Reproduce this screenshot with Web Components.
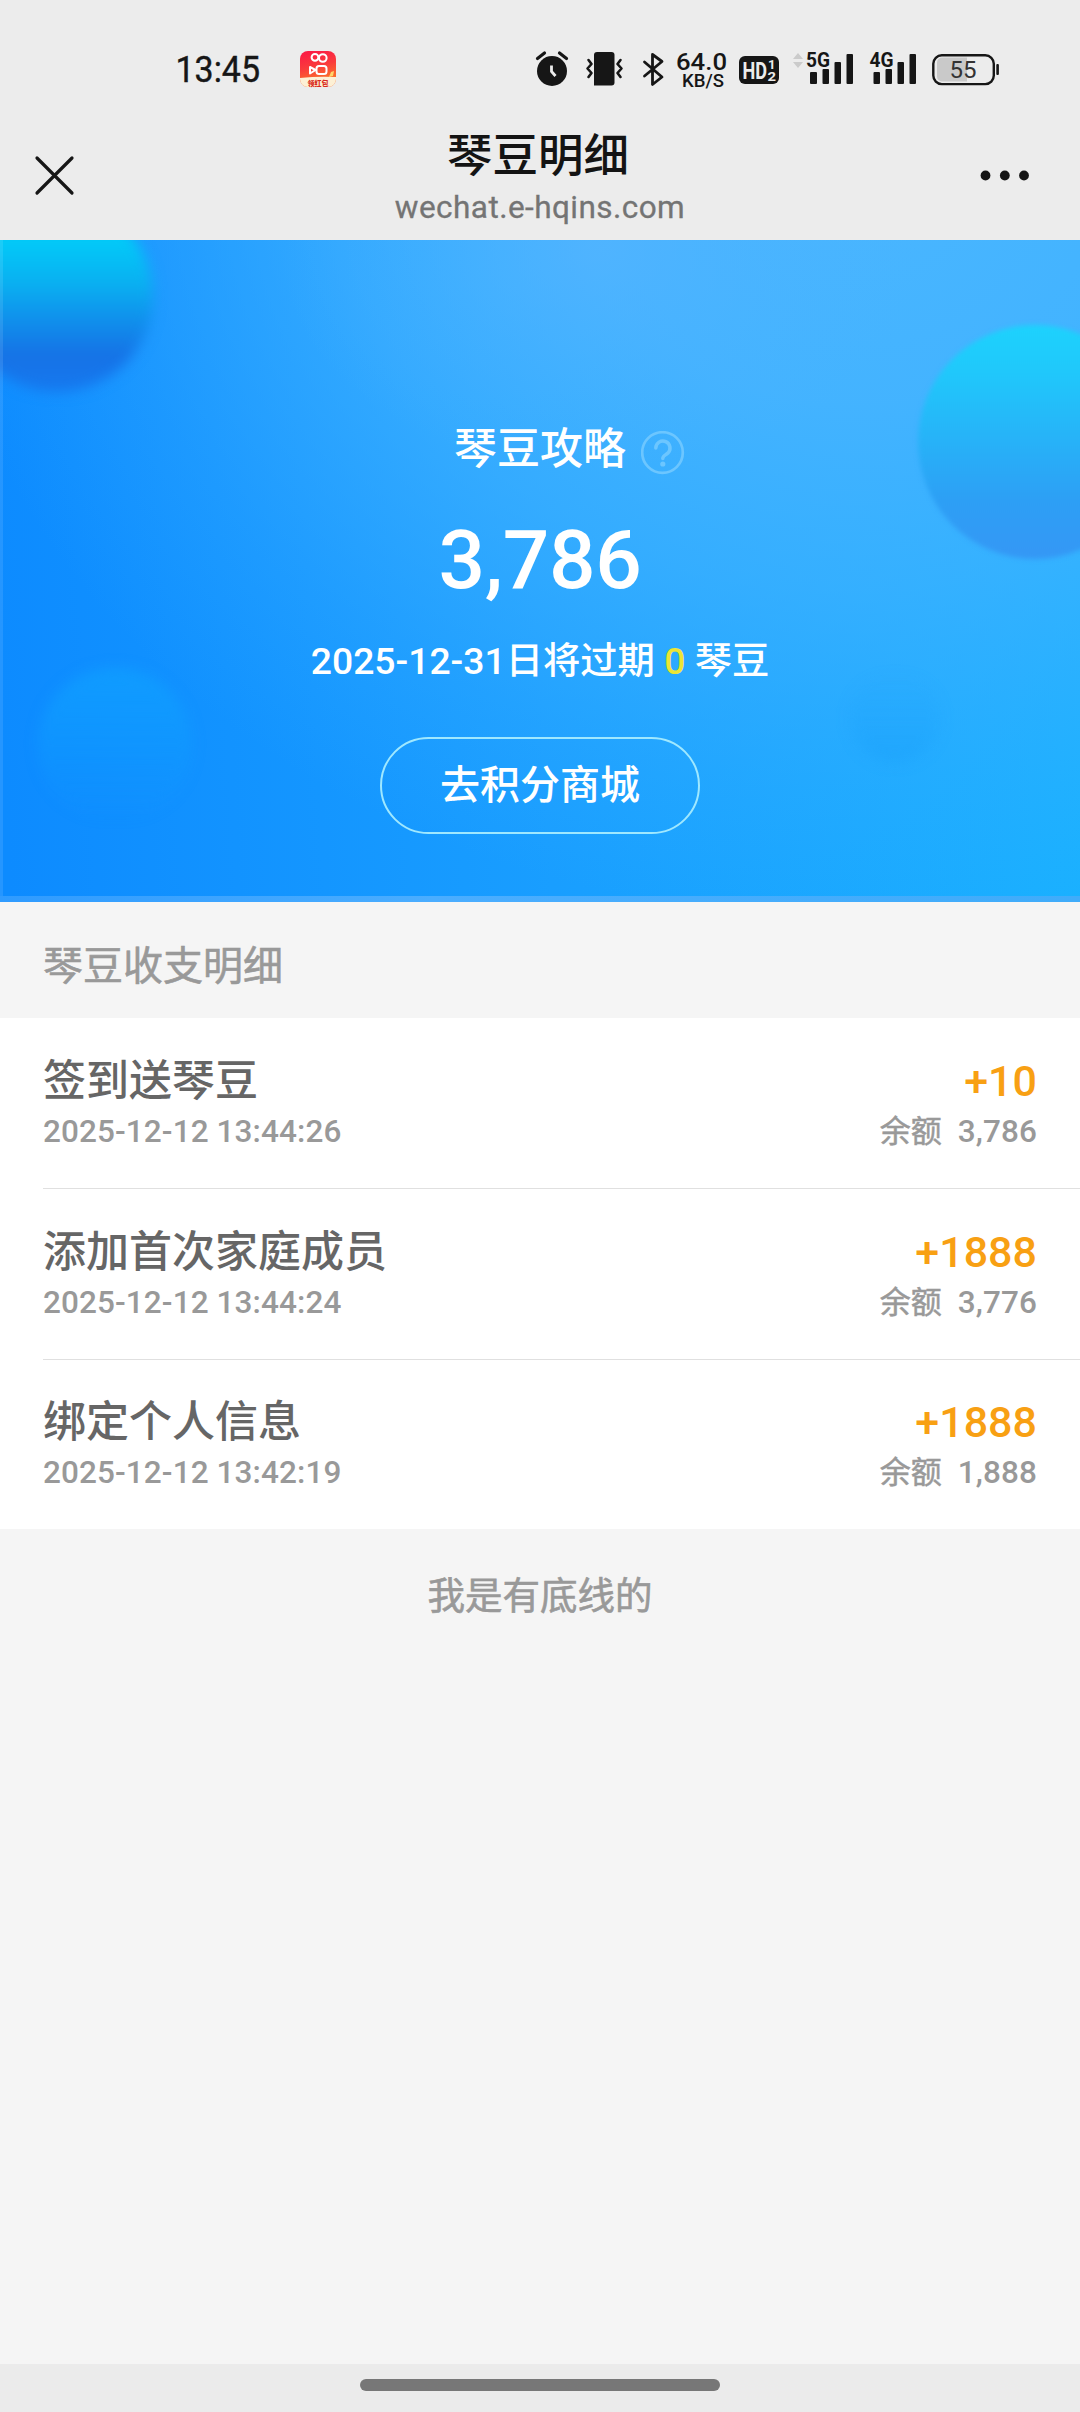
<!DOCTYPE html>
<html lang="zh-CN">
<head>
<meta charset="utf-8">
<title>琴豆明细</title>
<style>
html,body{margin:0;padding:0}
body{width:1080px;height:2412px;background:#f5f5f5;overflow:hidden;font-family:Roboto,"Noto Sans CJK SC",sans-serif}
</style>
</head>
<body>
<bean-page></bean-page>
<script>
const define = (name, html) => customElements.define(name, class extends HTMLElement {
  constructor() {
    super();
    const t = document.createElement('template');
    t.innerHTML = html;
    this.attachShadow({ mode: 'open' }).appendChild(t.content.cloneNode(true));
  }
});

define('status-bar', `
<style>
:host{display:flex;height:110px;background:#ececec;color:#161616;box-sizing:border-box;padding:40px 0 0 170px}
svg{display:block;flex:none;height:60px;font-family:Roboto,"Noto Sans CJK SC",sans-serif}
.gap{flex:none;width:184px}
</style>
<svg width="110" viewBox="170 40 110 60"><text x="175.500" y="82" font-size="36" textLength="84.500" lengthAdjust="spacingAndGlyphs" fill="#161616" stroke="#161616" stroke-width=".4">13:45</text></svg>
<svg width="60" viewBox="280 40 60 60">
  <defs>
    <linearGradient id="k" x1="0" y1="0" x2="0.25" y2="1"><stop offset="0" stop-color="#fb1747"/><stop offset=".5" stop-color="#fa3b3c"/><stop offset=".85" stop-color="#fb6a2c"/></linearGradient>
    <clipPath id="c"><rect x="300" y="51" width="36" height="36" rx="8"/></clipPath>
  </defs>
  <g clip-path="url(#c)">
    <rect x="300" y="51" width="36" height="36" fill="url(#k)"/>
    <path d="M299 78Q318 76 337 77V88H299Z" fill="#fdf0d5"/>
    <path d="M331 72l3-1-1 5-4 1z" fill="#ffd66b"/>
  </g>
  <g fill="none" stroke="#fff" stroke-width="2">
    <circle cx="315" cy="57.3" r="3.4"/><circle cx="322.8" cy="58" r="3.8"/>
    <rect x="316.5" y="66" width="10" height="8" rx="2.5"/><path d="M315.5 70L310 67v6.500z" stroke-linejoin="round"/>
  </g>
  <text x="307.500" y="86" font-size="7" font-weight="900" fill="#d82a20" textLength="21" lengthAdjust="spacingAndGlyphs">领红包</text>
</svg>
<span class="gap"></span>
<svg width="51" viewBox="524 40 51 60">
  <circle cx="552" cy="71" r="15" fill="#161616"/>
  <path d="M537.500 58.500l7-5.500M566.500 58.500l-7-5.500" stroke="#161616" stroke-width="3.200" stroke-linecap="round"/>
  <path d="M551.500 65.500V71.500L555.500 76" fill="none" stroke="#ececec" stroke-width="2.800"/>
</svg>
<svg width="60" viewBox="575 40 60 60">
  <path d="M597 52h14.500a3 3 0 0 1 3 3v27.500a3 3 0 0 1-3 3H594V55a3 3 0 0 1 3-3z" fill="#161616"/>
  <path d="M588.500 60l3 4-4 4.500 4 4.500-3 4M620.500 60l-3 4 4 4.500-4 4.500 3 4" fill="none" stroke="#161616" stroke-width="2.600" stroke-linejoin="round" stroke-linecap="round"/>
</svg>
<svg width="37" viewBox="635 40 37 60"><path d="M644.500 62l17.500 15-9.500 7.500V54.500L662 61.500 644.500 76" fill="none" stroke="#161616" stroke-width="2.800" stroke-linejoin="round" stroke-linecap="round"/></svg>
<svg width="62" viewBox="672 40 62 60" fill="#161616" font-weight="500">
  <text x="676" y="70" font-size="24" textLength="51" lengthAdjust="spacingAndGlyphs">64.0</text>
  <text x="682" y="87" font-size="18" textLength="42" lengthAdjust="spacingAndGlyphs">KB/S</text>
</svg>
<svg width="54" viewBox="734 40 54 60" fill="#ececec" font-weight="700">
  <rect x="739" y="56" width="40" height="28" rx="6" fill="#161616"/>
  <text x="742.500" y="79" font-size="24" textLength="24.500" lengthAdjust="spacingAndGlyphs">HD</text>
  <text x="768" y="69" font-size="12.500" textLength="7.500" lengthAdjust="spacingAndGlyphs">1</text>
  <text x="767.500" y="81" font-size="12.500" textLength="8.500" lengthAdjust="spacingAndGlyphs">2</text>
</svg>
<svg width="74" viewBox="788 40 74 60" fill="#161616">
  <path d="M793 59l5-6 5 6zM793 62h10l-5 6z" fill="#cbcbcb"/>
  <text x="806" y="67" font-size="20" font-weight="700" textLength="24" lengthAdjust="spacingAndGlyphs">5G</text>
  <rect x="810" y="72" width="7" height="12" rx="1"/><rect x="822.500" y="69" width="6.500" height="15" rx="1"/><rect x="834.500" y="62" width="6.500" height="22" rx="1"/><rect x="846.500" y="54" width="6.500" height="30" rx="1"/>
</svg>
<svg width="62" viewBox="862 40 62 60" fill="#161616">
  <text x="869.500" y="67" font-size="20" font-weight="700" textLength="24" lengthAdjust="spacingAndGlyphs">4G</text>
  <rect x="873.500" y="72" width="6.500" height="12" rx="1"/><rect x="885.500" y="69" width="6.500" height="15" rx="1"/><rect x="897.500" y="62" width="6.500" height="22" rx="1"/><rect x="909.500" y="54" width="6.500" height="30" rx="1"/>
</svg>
<svg width="86" viewBox="924 40 86 60">
  <path d="M967 57.500v24H942a5 5 0 0 1-5-5v-14a5 5 0 0 1 5-5z" fill="#c9c9c9"/>
  <rect x="933.300" y="55.300" width="60.500" height="28.800" rx="8.500" fill="none" stroke="#161616" stroke-width="2.400"/>
  <rect x="996.300" y="64" width="2.600" height="11" rx="1" fill="#161616"/>
  <text x="949.500" y="78" font-size="23.500" textLength="27" lengthAdjust="spacingAndGlyphs" fill="#333">55</text>
</svg>
`);

define('nav-bar', `
<style>
:host{display:grid;grid-template-columns:200px 1fr 200px;height:130px;background:#ececec}
.m{display:flex;flex-direction:column;align-items:center;padding-top:22px}
.t{font-size:45.500px;line-height:50px;color:#141414;font-weight:500;margin-right:4px}
.u{font-size:31.500px;line-height:40px;margin-top:6px;color:#747474;letter-spacing:.45px;-webkit-text-stroke:.3px #747474}
svg{display:block;width:200px;height:130px}
</style>
<svg viewBox="0 110 200 130"><path d="M37 158l35 35M72 158l-35 35" stroke="#161616" stroke-width="3.200" stroke-linecap="round"/></svg>
<div class="m"><div class="t"><slot name="title"></slot></div><div class="u"><slot name="url"></slot></div></div>
<svg viewBox="880 110 200 130" fill="#161616"><circle cx="985.500" cy="175.500" r="4.900"/><circle cx="1004.800" cy="175.500" r="4.900"/><circle cx="1024" cy="175.500" r="4.900"/></svg>
`);

define('bean-hero', `
<style>
:host{display:grid;height:662px;color:#fff;overflow:hidden}
.bg,.in{grid-area:1/1;min-width:0}
.bg{display:block;width:1080px;height:662px}
.in{z-index:1;display:flex;flex-direction:column;align-items:center;padding-top:179px}
.h{display:grid;grid-template-columns:1fr auto 1fr;width:100%;height:60px;line-height:60px;font-size:43px;font-weight:500}
.h svg{grid-column:3;width:44px;height:44px;margin:11.500px 0 0 14.500px}
.h span{grid-column:2}
.n{font-size:82px;line-height:90px;font-weight:500;margin-top:36px;letter-spacing:-.4px}
.e{font-size:37.300px;line-height:50px;margin-top:31px;font-weight:500;white-space:pre}
.e b{color:#ebe536;font-weight:500}
button{font:500 40px/95px Roboto,"Noto Sans CJK SC",sans-serif;box-sizing:border-box;width:320px;height:97px;margin:51px 0 0;padding:0;border:2px solid #9fe8ff;border-radius:49px;background:none;color:#fff}
button slot{display:block;margin-top:-1px}
</style>
<svg class="bg" viewBox="0 240 1080 662">
  <defs>
    <linearGradient id="b" gradientUnits="userSpaceOnUse" x1="0" y1="700" x2="1080" y2="640"><stop offset="0" stop-color="#0d8bff"/><stop offset=".5" stop-color="#199eff"/><stop offset="1" stop-color="#1ab1ff"/></linearGradient>
    <radialGradient id="t" gradientUnits="userSpaceOnUse" cx="0" cy="0" r="1" gradientTransform="translate(850 180) scale(920 740)"><stop offset="0" stop-color="#4ab6ff"/><stop offset=".3" stop-color="#47b4ff" stop-opacity=".92"/><stop offset=".55" stop-color="#44b3ff" stop-opacity=".64"/><stop offset=".8" stop-color="#40b0ff" stop-opacity=".25"/><stop offset="1" stop-color="#3aaeff" stop-opacity="0"/></radialGradient>
    <radialGradient id="r" gradientUnits="userSpaceOnUse" cx="0" cy="0" r="1" gradientTransform="translate(600 250) scale(320 220)"><stop offset="0" stop-color="#54b4ff" stop-opacity=".7"/><stop offset=".5" stop-color="#50b3ff" stop-opacity=".3"/><stop offset="1" stop-color="#4ab2ff" stop-opacity="0"/></radialGradient>
    <linearGradient id="o1" gradientUnits="userSpaceOnUse" x1="0" y1="240" x2="0" y2="385"><stop offset="0" stop-color="#02caf8"/><stop offset=".3" stop-color="#0ab0f1"/><stop offset=".55" stop-color="#1090ec"/><stop offset=".8" stop-color="#1672e6"/><stop offset="1" stop-color="#1678ee"/></linearGradient>
    <linearGradient id="o2" x1="0" y1="0" x2="0" y2="1"><stop offset="0" stop-color="#1dd2fd"/><stop offset=".2" stop-color="#20c8fb"/><stop offset=".75" stop-color="#2d9ff5"/><stop offset="1" stop-color="#3597f5"/></linearGradient>
    <linearGradient id="o3" gradientUnits="userSpaceOnUse" x1="0" y1="668" x2="0" y2="822"><stop offset="0" stop-color="#10a0ff" stop-opacity=".75"/><stop offset=".3" stop-color="#109eff" stop-opacity=".6"/><stop offset="1" stop-color="#109cff" stop-opacity="0"/></linearGradient>
    <linearGradient id="o4" x1="0" y1="0" x2="0" y2="1"><stop offset="0" stop-color="#1a9ffb" stop-opacity="0"/><stop offset="1" stop-color="#1a9ffb" stop-opacity=".4"/></linearGradient>
    <linearGradient id="f" x1="0" x2="1"><stop offset="0" stop-color="#2f9bff"/><stop offset=".4" stop-color="#4aadff"/><stop offset="1" stop-color="#40acfa"/></linearGradient>
    <filter id="s5" color-interpolation-filters="sRGB" filterUnits="userSpaceOnUse" x="-80" y="160" width="1240" height="760"><feGaussianBlur stdDeviation="6.500"/></filter>
    <filter id="s2" color-interpolation-filters="sRGB" filterUnits="userSpaceOnUse" x="860" y="280" width="360" height="330"><feGaussianBlur stdDeviation="2.500"/></filter>
  </defs>
  <rect y="240" width="1080" height="662" fill="url(#b)"/>
  <rect y="240" width="1080" height="662" fill="url(#t)"/>
  <rect y="240" width="1080" height="662" fill="url(#r)"/>
  <circle cx="57" cy="296" r="96" fill="url(#o1)" filter="url(#s5)"/>
  <circle cx="1035" cy="442" r="117" fill="url(#o2)" filter="url(#s2)"/>
  <circle cx="115" cy="745" r="77" fill="url(#o3)" filter="url(#s5)"/>
  <circle cx="895" cy="717" r="46" fill="url(#o4)" filter="url(#s5)"/>
  <rect y="240" width="3" height="662" fill="#fff" opacity=".1"/>
  <rect y="896" width="1080" height="6" fill="url(#f)"/>
</svg>
<div class="in">
  <div class="h"><span><slot name="title"></slot></span>
    <svg viewBox="0 0 44 44" fill="none" stroke="#6cc6ff" stroke-linecap="round"><circle cx="21.500" cy="21.500" r="20.300" stroke-width="2.700"/><path d="M14.800 17a7.100 7.100 0 1 1 12 5.200c-2.400 2-5 2.800-5 5.300" stroke-width="3.500"/><circle cx="21.800" cy="33" r="2.600" fill="#6cc6ff" stroke="none"/></svg>
  </div>
  <div class="n"><slot name="total"></slot></div>
  <div class="e"><slot name="expiry"></slot> <b><slot name="count"></slot></b> <slot name="unit"></slot></div>
  <button><slot name="action"></slot></button>
</div>
`);

define('section-title', `
<style>:host{display:block;box-sizing:border-box;height:116px;padding:35px 43px 0;font-size:40px;line-height:60px;color:#999;background:#f5f5f5;-webkit-text-stroke:.6px #999}</style>
<slot></slot>
`);

define('bean-row', `
<style>
:host{display:block;background:#fff;padding-left:43px}
.r{display:flex;justify-content:space-between;box-sizing:border-box;height:171px;border-bottom:1px solid #e0e0e0;padding:38px 43px 0 0}
:host([last]) .r{height:169px;border:0;padding-top:37px}
.t{font-size:43px;line-height:50px;color:#666;font-weight:500}
.d{font-size:31.500px;line-height:40px;margin-top:6px;color:#999;font-weight:500;letter-spacing:.1px}
.v{text-align:right}
.a{font-size:43px;line-height:50px;color:#f8a013;font-weight:500}
.l{font-weight:400;font-size:31px;-webkit-text-stroke:.5px #999}
.b{display:flex;gap:16px;justify-content:flex-end}
</style>
<div class="r">
  <div><div class="t"><slot name="name"></slot></div><div class="d"><slot name="time"></slot></div></div>
  <div class="v"><div class="a"><slot name="amount"></slot></div><div class="d b"><span class="l">余额</span><slot name="balance"></slot></div></div>
</div>
`);

define('end-note', `
<style>:host{display:block;text-align:center;box-sizing:border-box;padding-top:42px;font-size:37.500px;line-height:50px;color:#999;-webkit-text-stroke:.6px #999}</style>
<slot></slot>
`);

define('home-indicator', `
<style>:host{display:flex;justify-content:center;box-sizing:border-box;height:48px;padding-top:15px;background:#ebebeb}
i{width:360px;height:12px;border-radius:6px;background:#777}</style>
<i></i>
`);

define('bean-page', `
<style>:host{display:flex;flex-direction:column;width:1080px;height:2412px;background:#f5f5f5}end-note{flex:1}</style>
<status-bar></status-bar>
<nav-bar><span slot="title">琴豆明细</span><span slot="url">wechat.e-hqins.com</span></nav-bar>
<bean-hero><span slot="title">琴豆攻略</span><span slot="total">3,786</span><span slot="expiry">2025-12-31日将过期</span><span slot="count">0</span><span slot="unit">琴豆</span><span slot="action">去积分商城</span></bean-hero>
<section-title>琴豆收支明细</section-title>
<bean-row><span slot="name">签到送琴豆</span><span slot="time">2025-12-12 13:44:26</span><span slot="amount">+10</span><span slot="balance">3,786</span></bean-row>
<bean-row><span slot="name">添加首次家庭成员</span><span slot="time">2025-12-12 13:44:24</span><span slot="amount">+1888</span><span slot="balance">3,776</span></bean-row>
<bean-row last><span slot="name">绑定个人信息</span><span slot="time">2025-12-12 13:42:19</span><span slot="amount">+1888</span><span slot="balance">1,888</span></bean-row>
<end-note>我是有底线的</end-note>
<home-indicator></home-indicator>
`);
</script>
</body>
</html>
